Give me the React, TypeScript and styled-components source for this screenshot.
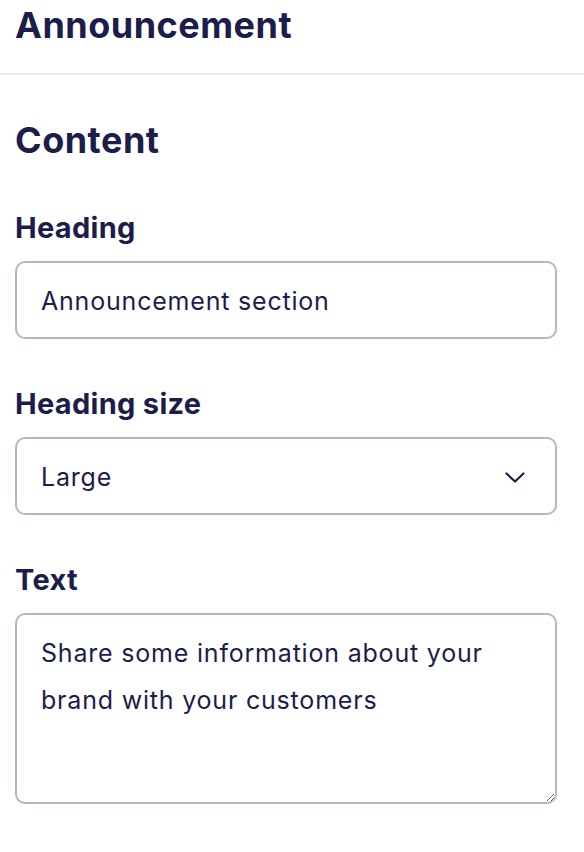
import styled, { createGlobalStyle } from 'styled-components';

const ink = '#1c1d4b';
const line = '#b0b9c3';
const font = "Inter, 'Noto Sans', sans-serif";

const GlobalStyle = createGlobalStyle`
	body {
		margin: 0;
		background: #ffffff;
		font-family: ${font};
		color: ${ink};
	}
`;

const Panel = styled.div`
	width: 584px;
	box-sizing: border-box;
`;

const Header = styled.div`
	height: 75px;
	border-bottom: 2px solid #eceef4;
	padding: 5px 15px 0;
	box-sizing: border-box;
`;

const Title = styled.h1`
	margin: 0;
	font-size: 36px;
	font-weight: 700;
	line-height: 40px;
	letter-spacing: 0.5px;
`;

const Body = styled.div`
	padding: 45px 27px 0 15px;
	display: flex;
	flex-direction: column;
`;

const Field = styled.div<{ $first?: boolean }>`
	margin-top: ${(p) => (p.$first ? 52 : 49)}px;
	display: flex;
	flex-direction: column;
	gap: 17px;
`;

const Label = styled.label`
	font-size: 29px;
	font-weight: 700;
	line-height: 32px;
	letter-spacing: 0.3px;
`;

const Box = styled.div`
	height: 78px;
	border: 2px solid ${line};
	border-radius: 10px;
	box-sizing: border-box;
	display: flex;
	align-items: center;
	justify-content: space-between;
	padding: 2px 30px 0 24px;
	font-size: 25px;
	font-weight: 400;
	letter-spacing: 0.8px;
`;

const Area = styled.textarea`
	height: 191px;
	border: 2px solid ${line};
	border-radius: 10px;
	box-sizing: border-box;
	padding: 15px 24px;
	font-family: ${font};
	font-size: 25px;
	letter-spacing: 0.8px;
	line-height: 47px;
	color: ${ink};
	resize: vertical;
	outline: none;
`;

const Chevron = () => (
	<svg width='20' height='11' viewBox='0 0 20 11' fill='none'>
		<polyline points='1.5,1.5 10,9.5 18.5,1.5' stroke={ink} strokeWidth='2.2' strokeLinecap='round' strokeLinejoin='round' />
	</svg>
);

const App = () => {
	return (
		<Panel>
			<GlobalStyle />
			<Header>
				<Title>Announcement</Title>
			</Header>
			<Body>
				<Title>Content</Title>
				<Field $first>
					<Label>Heading</Label>
					<Box>Announcement section</Box>
				</Field>
				<Field>
					<Label>Heading size</Label>
					<Box>
						<span>Large</span>
						<Chevron />
					</Box>
				</Field>
				<Field>
					<Label>Text</Label>
					<Area readOnly defaultValue='Share some information about your brand with your customers' />
				</Field>
			</Body>
		</Panel>
	);
};

export default App;
